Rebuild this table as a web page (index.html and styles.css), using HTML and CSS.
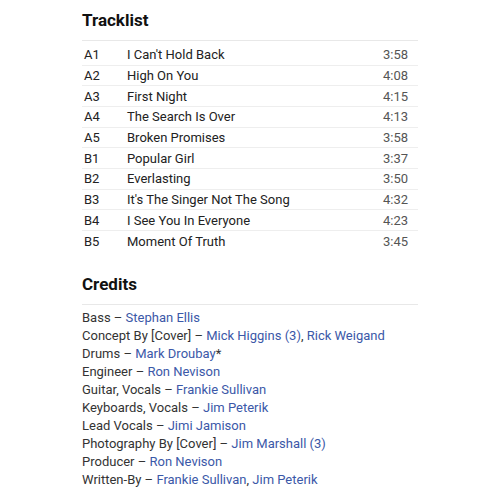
FILE: index.html
```html
<!DOCTYPE html>
<html>
<head>
<meta charset="utf-8">
<link rel="stylesheet" href="styles.css">
</head>
<body>
<div class="page">
  <section class="section tracklist">
    <h2 class="heading">Tracklist</h2>
    <div class="tracks">
      <div class="track"><span class="pos">A1</span><span class="title">I Can't Hold Back</span><span class="dur">3:58</span></div>
      <div class="track"><span class="pos">A2</span><span class="title">High On You</span><span class="dur">4:08</span></div>
      <div class="track"><span class="pos">A3</span><span class="title">First Night</span><span class="dur">4:15</span></div>
      <div class="track"><span class="pos">A4</span><span class="title">The Search Is Over</span><span class="dur">4:13</span></div>
      <div class="track"><span class="pos">A5</span><span class="title">Broken Promises</span><span class="dur">3:58</span></div>
      <div class="track"><span class="pos">B1</span><span class="title">Popular Girl</span><span class="dur">3:37</span></div>
      <div class="track"><span class="pos">B2</span><span class="title">Everlasting</span><span class="dur">3:50</span></div>
      <div class="track"><span class="pos">B3</span><span class="title">It's The Singer Not The Song</span><span class="dur">4:32</span></div>
      <div class="track"><span class="pos">B4</span><span class="title">I See You In Everyone</span><span class="dur">4:23</span></div>
      <div class="track"><span class="pos">B5</span><span class="title">Moment Of Truth</span><span class="dur">3:45</span></div>
    </div>
  </section>
  <section class="section credits">
    <h2 class="heading">Credits</h2>
    <ul class="credit-list">
      <li>Bass – <a class="link">Stephan Ellis</a></li>
      <li>Concept By [Cover] – <a class="link">Mick Higgins (3)</a>, <a class="link">Rick Weigand</a></li>
      <li>Drums – <a class="link">Mark Droubay</a>*</li>
      <li>Engineer – <a class="link">Ron Nevison</a></li>
      <li>Guitar, Vocals – <a class="link">Frankie Sullivan</a></li>
      <li>Keyboards, Vocals – <a class="link">Jim Peterik</a></li>
      <li>Lead Vocals – <a class="link">Jimi Jamison</a></li>
      <li>Photography By [Cover] – <a class="link">Jim Marshall (3)</a></li>
      <li>Producer – <a class="link">Ron Nevison</a></li>
      <li>Written-By – <a class="link">Frankie Sullivan</a>, <a class="link">Jim Peterik</a></li>
    </ul>
  </section>
</div>
</body>
</html>
```

FILE: styles.css
```css
html, body {
  margin: 0;
  padding: 0;
  background: #fff;
}
body {
  font-family: Roboto, "Liberation Sans", sans-serif;
  color: #333;
}
.page {
  width: 336px;
  margin-left: 82px;
}
.heading {
  margin: 0;
  font-size: 17px;
  font-weight: 700;
  line-height: 24px;
  color: #111;
  padding: 8px 0 8px 0;
  border-bottom: 1px solid #e8e8e8;
}
.tracks {
  padding-top: 4px;
}
.track {
  display: flex;
  align-items: center;
  height: 20.67px;
  box-sizing: border-box;
  border-bottom: 1px solid #eee;
  font-size: 13px;
  color: #222;
}
.track:last-child {
  border-bottom: none;
}
.pos {
  width: 43px;
  padding-left: 2px;
  flex-shrink: 0;
}
.title {
  flex: 1;
}
.dur {
  padding-right: 10px;
  color: #555;
}
.credits {
  margin-top: 12px;
}
.credit-list {
  list-style: none;
  margin: 0;
  padding: 4px 0 0 0;
  font-size: 13px;
  line-height: 18px;
  color: #333;
}
.link {
  color: #3b58a8;
  text-decoration: none;
}
```
